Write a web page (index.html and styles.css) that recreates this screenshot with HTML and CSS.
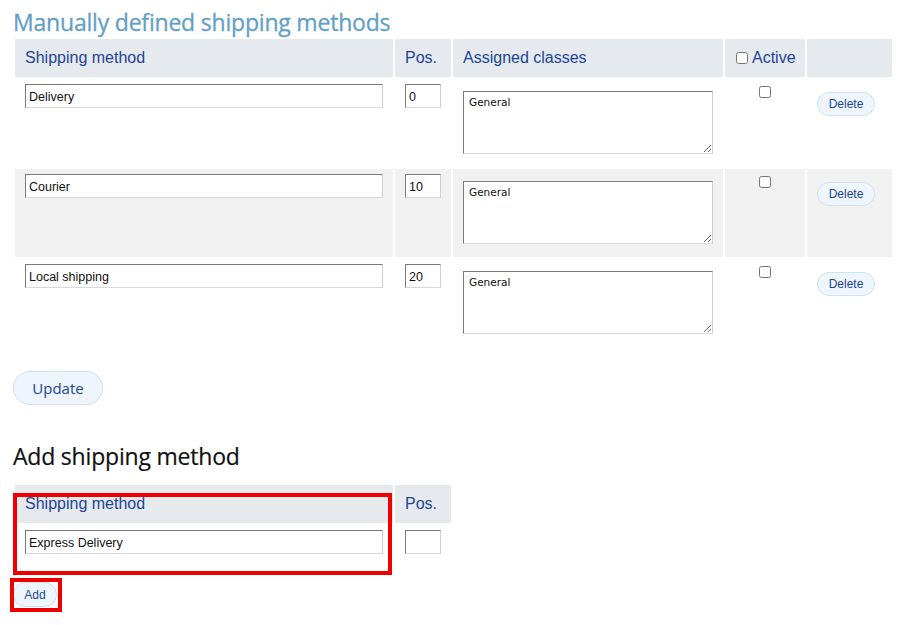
FILE: index.html
```html
<!DOCTYPE html>
<html>
<head>
<meta charset="utf-8">
<link rel="stylesheet" href="styles.css">
</head>
<body>
<h1 class="title">Manually defined shipping methods</h1>
<table class="grid">
  <thead>
    <tr>
      <th class="c-name">Shipping method</th>
      <th class="c-pos">Pos.</th>
      <th class="c-cls">Assigned classes</th>
      <th class="c-act"><input type="checkbox" class="chk-head">Active</th>
      <th class="c-del"></th>
    </tr>
  </thead>
  <tbody>
    <tr>
      <td><input class="txt" type="text" value="Delivery"></td>
      <td><input class="pos" type="text" value="0"></td>
      <td><textarea class="area">General</textarea></td>
      <td class="center"><input type="checkbox" class="chk"></td>
      <td><button class="pill small">Delete</button></td>
    </tr>
    <tr class="alt">
      <td><input class="txt" type="text" value="Courier"></td>
      <td><input class="pos" type="text" value="10"></td>
      <td><textarea class="area">General</textarea></td>
      <td class="center"><input type="checkbox" class="chk"></td>
      <td><button class="pill small">Delete</button></td>
    </tr>
    <tr>
      <td><input class="txt" type="text" value="Local shipping"></td>
      <td><input class="pos" type="text" value="20"></td>
      <td><textarea class="area">General</textarea></td>
      <td class="center"><input type="checkbox" class="chk"></td>
      <td><button class="pill small">Delete</button></td>
    </tr>
  </tbody>
</table>
<button class="pill big">Update</button>

<h2 class="subtitle">Add shipping method</h2>
<div class="addwrap">
  <table class="grid add">
    <thead>
      <tr>
        <th class="c-name">Shipping method</th>
        <th class="c-pos">Pos.</th>
      </tr>
    </thead>
    <tbody>
      <tr class="short">
        <td><input class="txt" type="text" value="Express Delivery"></td>
        <td><input class="pos" type="text" value=""></td>
      </tr>
    </tbody>
  </table>
  <button class="pill add-btn">Add</button>
  <div class="mark mark-row"></div>
  <div class="mark mark-btn"></div>
</div>
</body>
</html>
```
FILE: styles.css
```css
html, body {
  margin: 0;
  padding: 0;
  background: #fff;
}
body {
  padding: 0 13px 20px;
  font-family: "Liberation Sans", Arial, sans-serif;
}
.title {
  margin: 8px 0 0;
  font-family: "Open Sans", "DejaVu Sans", sans-serif;
  font-weight: 400;
  font-size: 23px;
  line-height: 29px;
  color: #639fc7;
  letter-spacing: -0.2px;
  -webkit-text-stroke: 0.3px #639fc7;
}
.grid {
  border-collapse: separate;
  border-spacing: 2px;
  margin-left: 0;
}
.grid th {
  background: #e6eaee;
  color: #1d4597;
  font-weight: 400;
  font-size: 16px;
  text-align: left;
  height: 38px;
  padding: 0 10px;
  box-sizing: border-box;
  vertical-align: middle;
  white-space: nowrap;
}
.c-name { width: 378px; }
.c-pos { width: 56px; }
.c-cls { width: 270px; }
.grid th.c-act { width: 80px; padding: 0 0 0 10px; }
.c-del { width: 85px; }
.grid th, .grid td { box-sizing: border-box; }
.grid td {
  height: 88px;
  padding: 5px 10px;
  vertical-align: top;
}
.grid tr.alt td { background: #f1f1f1; }
.chk-head {
  margin: 0 4px 0 1px;
  width: 12px;
  height: 12px;
  vertical-align: -1px;
}
.txt {
  display: block;
  width: 358px;
  height: 24px;
  box-sizing: border-box;
  border: 1px solid;
  border-color: #7b7b7b #cfcfcf #d9d9d9 #7b7b7b;
  padding: 1px 3px 0;
  font-family: "Liberation Sans", Arial, sans-serif;
  font-size: 12.5px;
  color: #111;
  background: #fff;
}
.pos {
  display: block;
  width: 36px;
  height: 24px;
  box-sizing: border-box;
  border: 1px solid;
  border-color: #7b7b7b #cfcfcf #d9d9d9 #7b7b7b;
  padding: 1px 3px 0;
  font-family: "Liberation Sans", Arial, sans-serif;
  font-size: 12.5px;
  color: #111;
  background: #fff;
}
.area {
  display: block;
  margin-top: 7px;
  width: 250px;
  height: 63px;
  box-sizing: border-box;
  border: 1px solid;
  border-color: #7b7b7b #cfcfcf #d9d9d9 #7b7b7b;
  padding: 4px 5px;
  font-family: "DejaVu Sans", sans-serif;
  font-size: 10.5px;
  color: #111;
  resize: both;
  background: #fff;
}
.center { text-align: center; }
.chk {
  margin: 1px 0 0;
  width: 12px;
  height: 12px;
}
.pill {
  display: block;
  border: 1px solid #cfe0ef;
  background: #eef5fc;
  color: #1d4597;
  border-radius: 13px;
  cursor: pointer;
  padding: 0;
}
.small {
  margin-top: 8px;
  width: 58px;
  height: 24px;
  font-family: "Liberation Sans", Arial, sans-serif;
  font-size: 12px;
}
.big {
  margin-top: 22px;
  width: 90px;
  height: 34px;
  border-radius: 17px;
  font-family: "Open Sans", "DejaVu Sans", sans-serif;
  font-size: 15px;
  color: #1d4597;
}
.subtitle {
  margin: 36px 0 0;
  font-family: "Open Sans", "DejaVu Sans", sans-serif;
  font-weight: 400;
  font-size: 23px;
  line-height: 30px;
  color: #111;
  letter-spacing: -0.2px;
  -webkit-text-stroke: 0.2px #111;
}
.addwrap {
  position: relative;
  margin-top: 12px;
}
.add tr.short td { height: 52px; }
.add-btn {
  margin-top: 3px;
  width: 44px;
  height: 25px;
  font-family: "Liberation Sans", Arial, sans-serif;
  font-size: 12px;
}
.mark {
  position: absolute;
  box-sizing: border-box;
  border: 4px solid #ee0000;
  pointer-events: none;
}
.mark-row {
  left: 0;
  top: 10px;
  width: 379px;
  height: 82px;
}
.mark-btn {
  left: -3px;
  top: 95px;
  width: 52px;
  height: 34px;
}
```
